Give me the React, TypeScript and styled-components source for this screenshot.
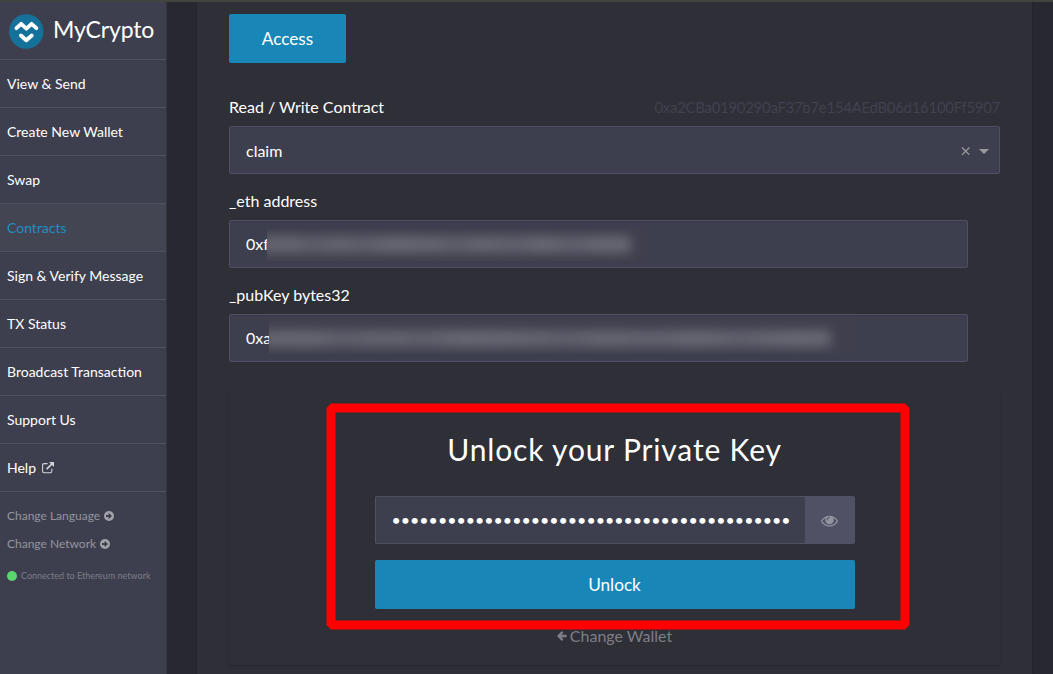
import React from 'react';
import styled, { createGlobalStyle, css } from 'styled-components';

const GlobalStyle = createGlobalStyle`
  *, *::before, *::after { box-sizing: border-box; }
  html, body { margin: 0; height: 100%; overflow: hidden; }
  body {
    background: #282831;
    color: #fff;
    font-family: Lato, sans-serif;
    font-size: 16px;
    line-height: 24px;
  }
  input, button { font: inherit; color: inherit; }
`;

const Page = styled.div`
  position: relative;
  display: flex;
  width: 1053px;
  height: 674px;
  overflow: hidden;
  border-top: 2px solid #42443f;
`;

const Sidebar = styled.aside`
  width: 167px;
  flex: none;
  background: #3e3f4e;
  border-right: 1px solid #34343f;
  display: flex;
  flex-direction: column;
`;

const Brand = styled.div`
  height: 58px;
  flex: none;
  padding: 1px 0 0 9px;
  display: flex;
  align-items: center;
  gap: 9px;
  border-bottom: 1px solid #4f5061;
`;

const BrandName = styled.span`
  font-size: 23px;
  line-height: 30px;
  letter-spacing: -0.15px;
  padding-bottom: 4px;
`;

const NavItem = styled.a<{ $active?: boolean }>`
  height: 48px;
  flex: none;
  display: flex;
  align-items: center;
  gap: 6px;
  padding: 1px 0 0 7px;
  font-size: 14px;
  border-bottom: 1px solid #4f5061;
  ${(p) => p.$active && css`
    color: #1b90c1;
    background: #444553;
  `}
`;

const SidebarOptions = styled.div`
  padding: 10px 0 0 7px;
  color: #94959e;
  font-size: 12px;
`;

const Option = styled.div`
  height: 28px;
  display: flex;
  align-items: center;
  gap: 4px;
`;

const Connection = styled.div`
  display: flex;
  align-items: center;
  gap: 4px;
  height: 20px;
  margin-top: 8px;
  color: #7c7d87;
  font-size: 9px;
  white-space: nowrap;
`;

const StatusDot = styled.i`
  width: 10px;
  height: 10px;
  border-radius: 50%;
  background: #5bd66c;
`;

const Panel = styled.main`
  width: 835px;
  margin-left: 30px;
  padding: 12px 32px 0;
  background: #2f2f38;
  box-shadow: 0 0 2px rgba(0, 0, 0, 0.35);
`;

const Button = styled.button<{ $width: string }>`
  display: block;
  width: ${(p) => p.$width};
  height: 49px;
  padding: 1px 0 0;
  border: 0;
  border-radius: 2px;
  background: #1887b8;
  color: #fff;
  font-size: 17.2px;
`;

const LabelRow = styled.div`
  display: flex;
  justify-content: space-between;
  height: 24px;
  margin-bottom: 7px;
`;

const ContractAddress = styled.span`
  color: #41414f;
  font-size: 15px;
  letter-spacing: -0.31px;
`;

const Contract = styled.section`
  margin-top: 32px;
`;

const Field = styled.section`
  margin-top: 15px;
`;

const Box = styled.div<{ $width?: string }>`
  position: relative;
  width: ${(p) => p.$width || '100%'};
  height: 48px;
  display: flex;
  align-items: center;
  padding: ${(p) => (p.$width ? '0' : '2px')} 10px 0 16px;
  border: 1px solid #514f66;
  border-radius: 2px;
  background: #3e3f4e;
  box-shadow: inset 0 1px 1px rgba(0, 0, 0, 0.08);
`;

const SelectIcons = styled.svg`
  margin-left: auto;
`;

const Redaction = styled.div<{ $left: number; $top: number; $width: number; $height: number }>`
  position: absolute;
  left: ${(p) => p.$left}px;
  top: ${(p) => p.$top}px;
  width: ${(p) => p.$width}px;
  height: ${(p) => p.$height}px;
  overflow: hidden;
  background: #3f3f4d;
`;

const Smear = styled.div<{ $top: number; $end: number }>`
  position: absolute;
  left: -8px;
  right: ${(p) => p.$end}px;
  top: ${(p) => p.$top}px;
  height: 17px;
  background: linear-gradient(90deg, #666671, #686873 9%, #5f5f6b 14%, #666671 22%, #60606c 28%, #6a6a75 36%, #656570 48%, #5f5f6b 53%, #676772 60%, #62626e 69%, #6a6a75 76%, #61616d 84%, #6a6a75 93%, #686873);
  filter: blur(6px);
`;

const WalletCard = styled.section`
  height: 274px;
  margin-top: 29px;
  padding: 36px 0 0;
  display: flex;
  flex-direction: column;
  align-items: center;
  border-radius: 2px;
  box-shadow: 0 1px 2px rgba(0, 0, 0, 0.22);
`;

const Title = styled.h2`
  margin: 0;
  font-size: 30px;
  line-height: 44px;
  font-weight: 400;
  letter-spacing: 0.84px;
`;

const Form = styled.div`
  width: 480px;
  margin-top: 25px;
  display: flex;
  flex-direction: column;
  gap: 16px;
`;

const PasswordRow = styled.div`
  display: flex;
  height: 48px;
`;

const PasswordInput = styled.input`
  width: 430px;
  height: 48px;
  padding: 0 0 2px 16px;
  border: 1px solid #514f66;
  border-right: 0;
  border-radius: 2px 0 0 2px;
  background: #3e3f4e;
  outline: 0;
`;

const Reveal = styled.span`
  flex: 1;
  display: flex;
  align-items: center;
  justify-content: center;
  background: #515165;
  border-radius: 0 2px 2px 0;
  color: #9293a0;
`;

const ChangeWallet = styled.a`
  display: flex;
  align-items: center;
  gap: 3px;
  margin-top: 15px;
  color: #7e7e86;
`;

const Highlight = styled.svg`
  position: absolute;
  left: 326px;
  top: 401px;
`;

const Logo = () => (
  <svg width="35" height="35" viewBox="0 0 35 35" fill="none">
    <circle cx="17.3" cy="17.5" r="17.2" fill="#147199" />
    <path d="M7.4 14.2L12.2 9.8l5.2 4.9 5.2-4.9 4.8 4.4" stroke="#fff" strokeWidth="3.8" strokeLinecap="round" strokeLinejoin="round" />
    <path d="M11.9 21.5l5.4 4.7 5.4-4.7" stroke="#fff" strokeWidth="4" strokeLinecap="round" strokeLinejoin="round" />
  </svg>
);

const ExternalLink = () => (
  <svg width="12" height="12" viewBox="0 0 12 12" fill="none" stroke="#d2d3d8">
    <path d="M5.6 1.6H2.1Q.6 1.6.6 3.1v6.2q0 1.5 1.5 1.5h6.2q1.5 0 1.5-1.5V6.8" strokeWidth="1.1" />
    <path d="M4.6 7.2L10 1.8" strokeWidth="1.7" />
    <path d="M7 0h5v5z" fill="#d2d3d8" stroke="none" />
  </svg>
);

const CircleArrow = () => (
  <svg width="10" height="10" viewBox="0 0 10 10" fill="none">
    <circle cx="5" cy="5" r="5" fill="#a1a2aa" />
    <path d="M2 4.1h2.6V1.8L8 5 4.6 8.2V5.9H2z" fill="#3e3f4e" />
  </svg>
);

const Eye = () => (
  <svg width="17" height="17" viewBox="0 0 1792 1792" fill="currentColor">
    <path d="M1664 960q-152-236-381-353 61 104 61 225 0 185-131.5 316.5t-316.5 131.5-316.5-131.5-131.5-316.5q0-121 61-225-229 117-381 353 133 205 333.5 326.5t434.5 121.5 434.5-121.5 333.5-326.5zm-720-384q0-20-14-34t-34-14q-125 0-214.5 89.5t-89.5 214.5q0 20 14 34t34 14 34-14 14-34q0-86 61-147t147-61q20 0 34-14t14-34zm848 384q0 34-20 69-140 230-376.5 368.5t-499.5 138.5-499.5-139-376.5-368q-20-35-20-69t20-69q140-229 376.5-368t499.5-139 499.5 139 376.5 368q20 35 20 69z" />
  </svg>
);

const links = ['View & Send', 'Create New Wallet', 'Swap', 'Contracts', 'Sign & Verify Message', 'TX Status', 'Broadcast Transaction', 'Support Us', 'Help'];

export default function App() {
  return (
    <Page>
      <GlobalStyle />
      <Sidebar>
        <Brand>
          <Logo />
          <BrandName>MyCrypto</BrandName>
        </Brand>
        {links.map((name) => (
          <NavItem key={name} $active={name === 'Contracts'}>
            {name}
            {name === 'Help' && <ExternalLink />}
          </NavItem>
        ))}
        <SidebarOptions>
          <Option>Change Language <CircleArrow /></Option>
          <Option>Change Network <CircleArrow /></Option>
          <Connection><StatusDot />Connected to Ethereum network</Connection>
        </SidebarOptions>
      </Sidebar>
      <Panel>
        <Button $width="117px">Access</Button>
        <Contract>
          <LabelRow>
            <span>Read / Write Contract</span>
            <ContractAddress>0xa2CBa0190290aF37b7e154AEdB06d16100Ff5907</ContractAddress>
          </LabelRow>
          <Box>
            claim
            <SelectIcons width="29" height="10" viewBox="0 0 29 10">
              <path d="M2 1.5l7.4 7.4M9.4 1.5L2 8.9" stroke="#999" strokeWidth="1.3" />
              <path d="M19 3h10l-5 5z" fill="#999" />
            </SelectIcons>
          </Box>
        </Contract>
        <Field>
          <LabelRow>_eth address</LabelRow>
          <Box $width="739px">
            0xf
            <Redaction $left={37} $top={8} $width={382} $height={32}><Smear $top={7} $end={18} /></Redaction>
          </Box>
        </Field>
        <Field>
          <LabelRow>_pubKey bytes32</LabelRow>
          <Box $width="739px">
            0xa
            <Redaction $left={39} $top={4} $width={585} $height={35}><Smear $top={11} $end={23} /></Redaction>
          </Box>
        </Field>
        <WalletCard>
          <Title>Unlock your Private Key</Title>
          <Form>
            <PasswordRow>
              <PasswordInput type="password" readOnly value={'x'.repeat(43)} />
              <Reveal><Eye /></Reveal>
            </PasswordRow>
            <Button $width="100%">Unlock</Button>
          </Form>
          <ChangeWallet>
            <svg width="10" height="10" viewBox="0 0 10 10" fill="none" stroke="currentColor" strokeWidth="2.3">
              <path d="M9.5 5H2M5.6 .9L1.6 5l4 4.1" />
            </svg>
            Change Wallet
          </ChangeWallet>
        </WalletCard>
      </Panel>
      <Highlight width="584" height="227" viewBox="0 0 584 227" fill="none">
        <path d="M5 .5H579L583.5 5V222L579 226.5H5L.5 222V5zM9.5 9.5V217.5H574.5V9.5z" fill="#f00" fillRule="evenodd" />
      </Highlight>
    </Page>
  );
}
